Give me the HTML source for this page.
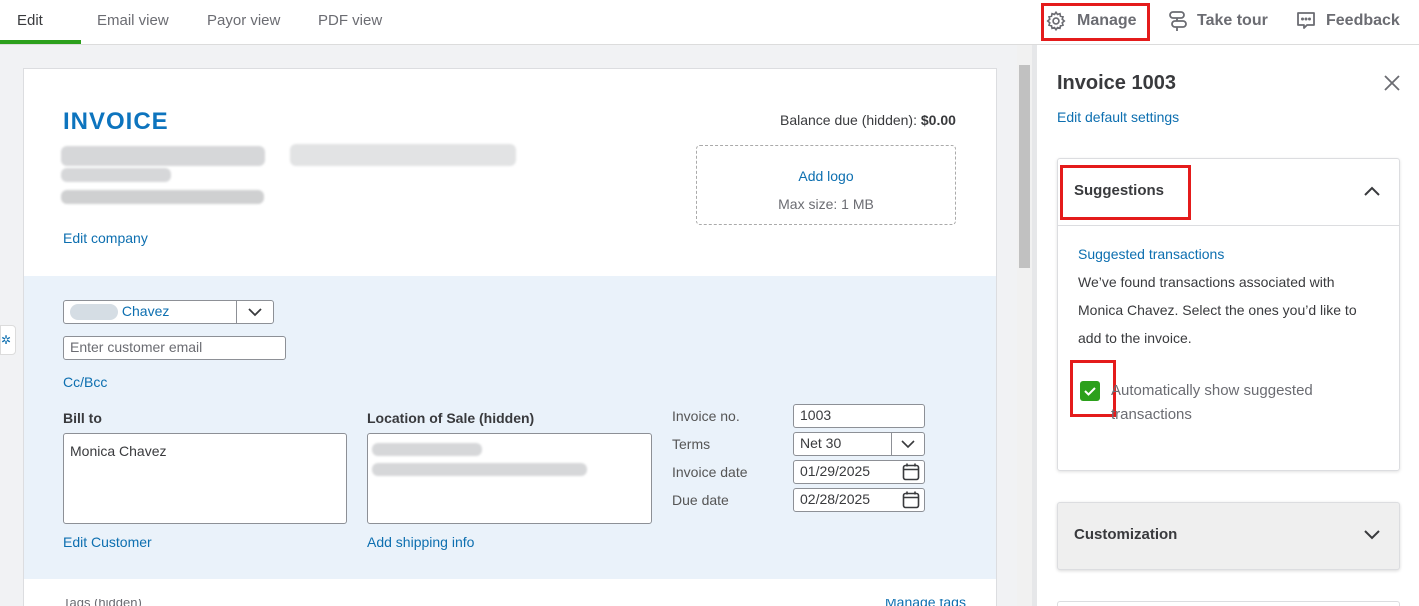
<!DOCTYPE html>
<html style="overflow:hidden;height:606px"><head><style>
*{margin:0;padding:0;box-sizing:border-box}
body{width:1419px;height:606px;overflow:hidden;background:#fff;font-family:"Liberation Sans",sans-serif;position:relative;color:#393a3d}
.a{position:absolute}
.tab{position:absolute;top:12px;font-size:15px;color:#6b6c72}
.link{color:#0d6fb0;font-size:14px}
.inp{position:absolute;background:#fff;border:1px solid #8d9096;border-radius:3px;font-size:14px;color:#393a3d;padding-left:6px;line-height:20px}
.blur{position:absolute;background:#d6d7d9;border-radius:6px;filter:blur(1px)}
.lbl{position:absolute;font-size:14px;color:#555}
.red{position:absolute;border:3px solid #e41b1b}
</style></head><body>
<div class="tab" style="left:17px;color:#393a3d">Edit</div>
<div class="a" style="left:0;top:40px;width:81px;height:4px;background:#2ca01c"></div>
<div class="tab" style="left:97px">Email view</div>
<div class="tab" style="left:207px">Payor view</div>
<div class="tab" style="left:318px">PDF view</div>
<div class="a" style="left:0;top:44px;width:1419px;height:1px;background:#dcdcdc"></div>
<svg class="a" style="left:1045px;top:10px" width="22" height="22" viewBox="0 0 24 24" fill="none" stroke="#6b6c72" stroke-width="1.8"><circle cx="12" cy="12" r="3.2"/><path d="M12 2.5l1.6 2.3 2.7-.8.6 2.7 2.7.7-.8 2.7 2.2 1.9-2.2 1.9.8 2.7-2.7.7-.6 2.7-2.7-.8L12 21.5l-1.6-2.3-2.7.8-.6-2.7-2.7-.7.8-2.7L3 12l2.2-1.9-.8-2.7 2.7-.7.6-2.7 2.7.8z"/></svg>
<div class="a" style="left:1077px;top:12px;font-size:16px;font-weight:bold;color:#6b6c72">Manage</div>
<div class="red" style="left:1041px;top:3px;width:109px;height:38px"></div>
<svg class="a" style="left:1168px;top:10px" width="20" height="22" viewBox="0 0 20 22" fill="none" stroke="#6b6c72" stroke-width="1.8"><rect x="2" y="2" width="14" height="6" rx="3"/><rect x="4" y="11" width="14" height="6" rx="3"/><path d="M9 8v3M9 17v4"/></svg>
<div class="a" style="left:1197px;top:12px;font-size:16px;font-weight:bold;color:#6b6c72">Take tour</div>
<svg class="a" style="left:1295px;top:10px" width="22" height="22" viewBox="0 0 22 22" fill="none" stroke="#6b6c72" stroke-width="1.8"><path d="M3 3h16v12h-7l-3 3v-3H3z" stroke-linejoin="round"/><circle cx="7.5" cy="9" r=".6" fill="#6b6c72"/><circle cx="11" cy="9" r=".6" fill="#6b6c72"/><circle cx="14.5" cy="9" r=".6" fill="#6b6c72"/></svg>
<div class="a" style="left:1326px;top:12px;font-size:16px;font-weight:bold;color:#6b6c72">Feedback</div>

<div class="a" style="left:0;top:45px;width:1037px;height:561px;background:#f1f2f4"></div>
<div class="a" style="left:1017px;top:45px;width:15px;height:561px;background:#f1f1f1"></div>
<div class="a" style="left:1019px;top:65px;width:11px;height:203px;background:#c1c1c1"></div>
<div class="a" style="left:1032px;top:45px;width:5px;height:561px;background:#e6e7e9"></div>
<div class="a" style="left:0;top:325px;width:16px;height:30px;background:#fff;border:1px solid #dcdcdc;border-radius:0 4px 4px 0;color:#0d6fb0;font-size:12px;line-height:28px">✲</div>

<div class="a" style="left:23px;top:68px;width:974px;height:538px;background:#fff;border:1px solid #dcdde0;border-bottom:none"></div>
<div class="a" style="left:63px;top:108px;font-size:24px;font-weight:bold;color:#0d74be;letter-spacing:1px">INVOICE</div>
<div class="blur" style="left:61px;top:146px;width:204px;height:20px"></div>
<div class="blur" style="left:290px;top:144px;width:226px;height:22px;background:#e2e3e4"></div>
<div class="blur" style="left:61px;top:168px;width:110px;height:14px"></div>
<div class="blur" style="left:61px;top:190px;width:203px;height:14px;background:#cfd0d1"></div>
<div class="a link" style="left:63px;top:230px">Edit company</div>
<div class="a" style="left:780px;top:112px;font-size:14px;color:#393a3d">Balance due (hidden): <b>$0.00</b></div>
<div class="a" style="left:696px;top:145px;width:260px;height:80px;border:1px dashed #aaa;border-radius:4px;text-align:center">
<div class="link" style="margin-top:22px">Add logo</div><div style="font-size:14px;color:#6b6c72;margin-top:12px">Max size: 1 MB</div></div>

<div class="a" style="left:24px;top:276px;width:972px;height:303px;background:#eaf2fa"></div>
<div class="inp" style="left:63px;top:300px;width:211px;height:24px"><span style="display:inline-block;width:48px;height:16px;background:#d5dde4;border-radius:8px;vertical-align:middle"></span><span style="color:#0d6fb0"> Chavez</span></div>
<div class="a" style="left:236px;top:301px;width:1px;height:22px;background:#8d9096"></div>
<svg class="a" style="left:247px;top:306px" width="16" height="12" viewBox="0 0 16 12"><path d="M2 3l6 6 6-6" fill="none" stroke="#393a3d" stroke-width="1.8"/></svg>
<div class="inp" style="left:63px;top:336px;width:223px;height:24px;color:#6b6c72">Enter customer email</div>
<div class="a link" style="left:63px;top:374px">Cc/Bcc</div>
<div class="a" style="left:63px;top:410px;font-size:14px;font-weight:bold">Bill to</div>
<div class="inp" style="left:63px;top:433px;width:284px;height:91px;padding-top:7px">Monica Chavez</div>
<div class="a link" style="left:63px;top:534px">Edit Customer</div>
<div class="a" style="left:367px;top:410px;font-size:14px;font-weight:bold">Location of Sale (hidden)</div>
<div class="inp" style="left:367px;top:433px;width:285px;height:91px"></div>
<div class="blur" style="left:372px;top:443px;width:110px;height:13px"></div>
<div class="blur" style="left:372px;top:463px;width:215px;height:13px"></div>
<div class="a link" style="left:367px;top:534px">Add shipping info</div>

<div class="lbl" style="left:672px;top:408px">Invoice no.</div>
<div class="lbl" style="left:672px;top:436px">Terms</div>
<div class="lbl" style="left:672px;top:464px">Invoice date</div>
<div class="lbl" style="left:672px;top:492px">Due date</div>
<div class="inp" style="left:793px;top:404px;width:132px;height:24px">1003</div>
<div class="inp" style="left:793px;top:432px;width:132px;height:24px">Net 30</div>
<div class="a" style="left:891px;top:433px;width:1px;height:22px;background:#8d9096"></div>
<svg class="a" style="left:900px;top:438px" width="16" height="12" viewBox="0 0 16 12"><path d="M2 3l6 6 6-6" fill="none" stroke="#393a3d" stroke-width="1.6"/></svg>
<div class="inp" style="left:793px;top:460px;width:132px;height:24px">01/29/2025</div>
<div class="inp" style="left:793px;top:488px;width:132px;height:24px">02/28/2025</div>
<svg class="a" style="left:901px;top:462px" width="20" height="20" viewBox="0 0 20 20" fill="none" stroke="#393a3d" stroke-width="1.6"><rect x="2.5" y="3.5" width="15" height="14" rx="2"/><path d="M2.5 7.5h15M6 1.5v3M14 1.5v3"/></svg>
<svg class="a" style="left:901px;top:490px" width="20" height="20" viewBox="0 0 20 20" fill="none" stroke="#393a3d" stroke-width="1.6"><rect x="2.5" y="3.5" width="15" height="14" rx="2"/><path d="M2.5 7.5h15M6 1.5v3M14 1.5v3"/></svg>
<div class="a" style="left:63px;top:599px;font-size:13px;line-height:7px;height:7px;overflow:hidden;color:#6b6c72">Tags (hidden)</div>
<div class="a link" style="left:885px;top:599px;line-height:7px;height:7px;overflow:hidden">Manage tags</div>

<div class="a" style="left:1057px;top:72px;font-size:20px;font-weight:bold;color:#393a3d">Invoice 1003</div>
<svg class="a" style="left:1383px;top:74px" width="18" height="18" viewBox="0 0 18 18"><path d="M2 2l14 14M16 2L2 16" stroke="#6b6c72" stroke-width="1.8"/></svg>
<div class="a link" style="left:1057px;top:109px">Edit default settings</div>
<div class="a" style="left:1057px;top:158px;width:343px;height:313px;border:1px solid #dcdde0;border-radius:3px;box-shadow:0 1px 3px rgba(0,0,0,.12)"></div>
<div class="a" style="left:1058px;top:225px;width:341px;height:1px;background:#dcdde0"></div>
<div class="a" style="left:1074px;top:182px;font-size:15px;font-weight:bold">Suggestions</div>
<div class="red" style="left:1060px;top:165px;width:131px;height:55px"></div>
<svg class="a" style="left:1363px;top:184px" width="18" height="14" viewBox="0 0 18 14"><path d="M2 11l7-7 7 7" fill="none" stroke="#393a3d" stroke-width="2"/></svg>
<div class="a link" style="left:1078px;top:246px">Suggested transactions</div>
<div class="a" style="left:1078px;top:268px;width:300px;font-size:14px;line-height:28px;color:#393a3d">We’ve found transactions associated with Monica Chavez. Select the ones you’d like to add to the invoice.</div>
<div class="a" style="left:1080px;top:381px;width:20px;height:20px;background:#2ca01c;border-radius:3px"></div>
<svg class="a" style="left:1080px;top:381px" width="20" height="20" viewBox="0 0 20 20"><path d="M5 10l3.5 3.5L15 7" fill="none" stroke="#fff" stroke-width="2"/></svg>
<div class="red" style="left:1070px;top:360px;width:46px;height:57px"></div>
<div class="a" style="left:1111px;top:379px;width:260px;font-size:15px;line-height:24px;color:#6b6c72">Automatically show suggested transactions</div>
<div class="a" style="left:1057px;top:502px;width:343px;height:68px;background:#efefef;border:1px solid #dcdde0;border-radius:3px;box-shadow:0 1px 3px rgba(0,0,0,.15)"></div>
<div class="a" style="left:1074px;top:526px;font-size:15px;font-weight:bold">Customization</div>
<svg class="a" style="left:1363px;top:528px" width="18" height="14" viewBox="0 0 18 14"><path d="M2 3l7 7 7-7" fill="none" stroke="#393a3d" stroke-width="2"/></svg>
<div class="a" style="left:1057px;top:601px;width:343px;height:5px;border:1px solid #dcdde0;border-bottom:none;border-radius:3px 3px 0 0"></div>
</body></html>
